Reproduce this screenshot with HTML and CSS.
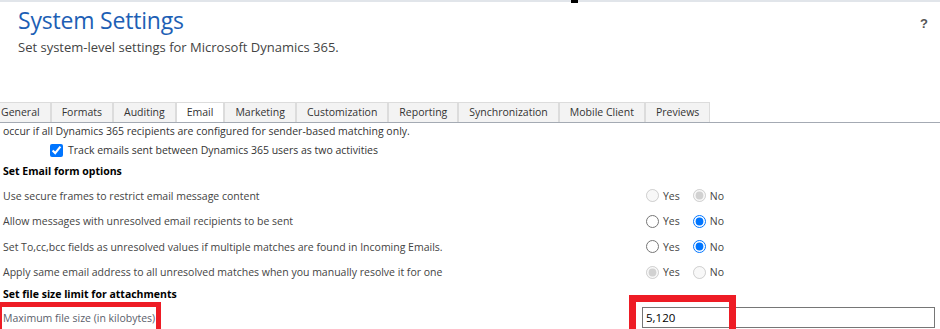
FILE: index.html
```html
<!DOCTYPE html>
<html lang="en">

<head>
    <meta charset="UTF-8">
    <meta name="viewport" content="width=device-width, initial-scale=1.0">
    <title>System Settings</title>
    <link rel="stylesheet" href="styles.css">
</head>

<body>
    <div class="topbar"><span class="caret"></span></div>
    <header class="page-head">
        <div>
            <h1>System Settings</h1>
            <p class="subtitle">Set system-level settings for Microsoft Dynamics 365.</p>
        </div>
        <span class="help">?</span>
    </header>
    <nav class="tabs">
        <a href="#" class="first">General</a>
        <a href="#">Formats</a>
        <a href="#">Auditing</a>
        <a href="#" class="active">Email</a>
        <a href="#">Marketing</a>
        <a href="#">Customization</a>
        <a href="#">Reporting</a>
        <a href="#">Synchronization</a>
        <a href="#">Mobile Client</a>
        <a href="#">Previews</a>
    </nav>
    <div class="content">
        <p class="note">occur if all Dynamics 365 recipients are configured for sender-based matching only.</p>
        <label class="check"><input type="checkbox" checked> Track emails sent between Dynamics 365 users as two activities</label>

        <h3>Set Email form options</h3>
        <div class="row">
            <span class="label">Use secure frames to restrict email message content</span>
            <div class="choice">
                <label><input type="radio" name="frames" disabled> Yes</label>
                <label><input type="radio" name="frames" disabled checked> No</label>
            </div>
        </div>
        <div class="row">
            <span class="label">Allow messages with unresolved email recipients to be sent</span>
            <div class="choice">
                <label><input type="radio" name="unresolved"> Yes</label>
                <label><input type="radio" name="unresolved" checked> No</label>
            </div>
        </div>
        <div class="row">
            <span class="label">Set To,cc,bcc fields as unresolved values if multiple matches are found in Incoming Emails.</span>
            <div class="choice">
                <label><input type="radio" name="multiple"> Yes</label>
                <label><input type="radio" name="multiple" checked> No</label>
            </div>
        </div>
        <div class="row">
            <span class="label">Apply same email address to all unresolved matches when you manually resolve it for one</span>
            <div class="choice">
                <label><input type="radio" name="apply" disabled checked> Yes</label>
                <label><input type="radio" name="apply" disabled> No</label>
            </div>
        </div>

        <h3 class="second">Set file size limit for attachments</h3>
        <div class="row file-row">
            <span class="label muted">Maximum file size (in kilobytes)</span>
            <input type="text" class="size-input" value="5,120">
        </div>

        <!-- red highlight marks -->
        <span class="mark mark-label"></span>
        <span class="mark mark-input"></span>
    </div>
</body>

</html>
```

FILE: styles.css
```css
:root {
    --BodyFont: 'Open Sans', 'Noto Sans', sans-serif;
    --TitleColor: #1d5fb5;
    --TextColor: #444;
    --MarkColor: #ee1c25;
}

body {
    font-family: var(--BodyFont);
    margin: 0;
    padding: 0;
    background-color: #fff;
    color: var(--TextColor);
    height: 329px;
    overflow: hidden;
}

.topbar {
    height: 2px;
    background-color: #e1e5ea;
    position: relative;
}

.topbar .caret {
    position: absolute;
    left: 571px;
    top: 0;
    width: 7px;
    height: 3px;
    background-color: #000;
}

.page-head {
    display: flex;
    justify-content: space-between;
    align-items: flex-start;
    padding: 0 12px 0 18px;
    height: 100px;
}

.page-head h1 {
    margin: 4px 0 0;
    font-size: 23px;
    font-weight: normal;
    line-height: 28px;
    color: var(--TitleColor);
    letter-spacing: -0.2px;
}

.page-head .subtitle {
    margin: 4px 0 0;
    font-size: 13px;
    line-height: 18px;
    color: var(--TextColor);
}

.help {
    margin-top: 14px;
    font-family: 'Liberation Sans', sans-serif;
    font-weight: bold;
    font-size: 13px;
    color: #555;
}

.tabs {
    display: flex;
    margin-left: -10px;
    height: 20px;
    border-bottom: 1px solid #a4aab3;
}

.tabs a {
    display: block;
    padding: 0 10px;
    font-size: 10.5px;
    line-height: 18px;
    color: #333;
    text-decoration: none;
    background-color: #f3f3f3;
    border: 1px solid #dcdcdc;
    border-bottom: none;
}

.tabs a.active {
    background-color: #fff;
}

.content {
    position: relative;
    padding: 0 5px 0 3px;
    font-size: 10.5px;
}

.note {
    margin: 0;
    height: 17px;
    line-height: 17px;
    color: #333;
}

.check {
    display: flex;
    align-items: center;
    height: 20px;
    padding-left: 44px;
    color: #333;
}

.check input {
    margin: 0 5px 0 3px;
    width: 13px;
    height: 13px;
}

.content h3 {
    margin: 0;
    height: 23px;
    line-height: 23px;
    font-size: 10.5px;
    font-weight: bold;
    color: #000;
}

.content h3.second {
    height: 18px;
    line-height: 18px;
}

.row {
    display: grid;
    grid-template-columns: 639px 1fr;
    align-items: center;
    height: 25.5px;
}

.label {
    color: var(--TextColor);
    white-space: nowrap;
}

.label.muted {
    color: #5b606b;
}

.choice {
    display: flex;
    gap: 9px;
}

.choice label {
    display: flex;
    align-items: center;
    color: var(--TextColor);
}

.choice input {
    margin: 0 4px 0 4px;
    width: 13px;
    height: 13px;
}

.file-row {
    height: 21px;
    margin-top: 4px;
}

.size-input {
    height: 21px;
    box-sizing: border-box;
    border: 1px solid #767676;
    padding: 0 3px;
    font-family: var(--BodyFont);
    font-size: 11.5px;
    color: #000;
    margin: 0;
}

.mark {
    position: absolute;
    border: 5px solid var(--MarkColor);
    border-bottom: none;
}

.mark-label {
    left: -3px;
    top: 179px;
    width: 154px;
    height: 40px;
}

.mark-input {
    left: 629px;
    top: 172px;
    width: 93px;
    height: 40px;
    border-width: 7px;
    border-bottom: none;
}
```
